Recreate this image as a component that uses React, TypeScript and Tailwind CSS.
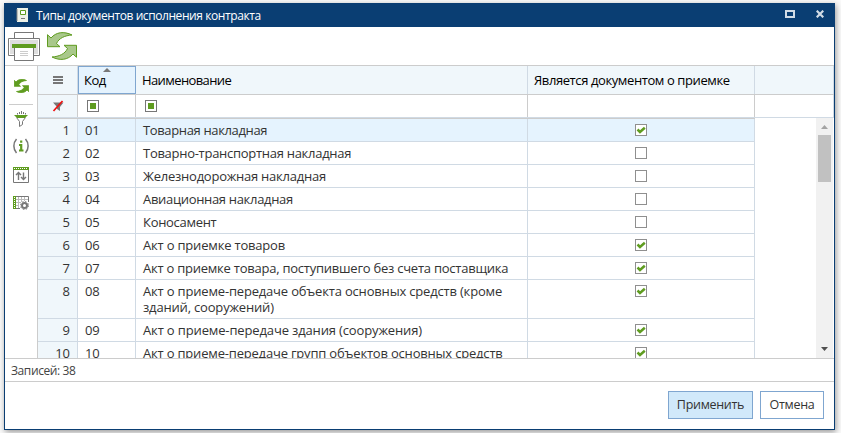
import React from "react";

const rows: [string, string, boolean, string][] = [
  ["01", "Товарная накладная", true, "tracking-[-0.36px]"],
  ["02", "Товарно-транспортная накладная", false, "tracking-[-0.28px]"],
  ["03", "Железнодорожная накладная", false, "tracking-[-0.24px]"],
  ["04", "Авиационная накладная", false, "tracking-[-0.32px]"],
  ["05", "Коносамент", false, "tracking-[-0.3px]"],
  ["06", "Акт о приемке товаров", true, "tracking-[-0.19px]"],
  ["07", "Акт о приемке товара, поступившего без счета поставщика", true, "tracking-[-0.24px]"],
  ["08", "Акт о приеме-передаче объекта основных средств (кроме зданий, сооружений)", true, "tracking-[-0.18px]"],
  ["09", "Акт о приеме-передаче здания (сооружения)", true, "tracking-[-0.14px]"],
  ["10", "Акт о приеме-передаче групп объектов основных средств", true, "tracking-[-0.19px]"],
];

function Swap({ className, soft }: { className: string; soft?: boolean }) {
  const arrow = "M.5 2.700L4 6C9 0 17-1 25 3C18 3.500 12 6 9.500 11.500L13 14.700H.5Z";
  return (
    <svg
      className={className}
      viewBox="0 0 30 28"
      fill={soft ? "#a9c88b" : "#5f9c20"}
      stroke="#5f9c20"
      strokeWidth={soft ? "1" : "1.6"}
    >
      <path d={arrow} />
      <path d={arrow} transform="rotate(180 15 14)" />
    </svg>
  );
}

function Check({ on }: { on: boolean }) {
  return (
    <span className="mt-[5px] block h-3 w-3 border border-[#8f8f8f] bg-white">
      {on && (
        <svg className="block h-[10px] w-[10px]" viewBox="0 0 10 10">
          <path d="M1.5 4.500L4 7L8.800 2.800" fill="none" stroke="#5f9c20" strokeWidth="2.500" />
        </svg>
      )}
    </span>
  );
}

function FilterBox() {
  return (
    <span className="block h-3 w-3 border border-[#777] bg-white p-[2px]">
      <span className="block h-[6px] w-[6px] bg-[#5f9c20]" />
    </span>
  );
}

function SideIcons() {
  return (
    <div className="flex w-8 shrink-0 flex-col items-center">
      <Swap className="mt-[13px] h-[14px] w-[15px]" />
      <div className="mt-[11px] h-px w-6 bg-[#ccc]" />
      <svg className="mt-[6px] h-4 w-4" viewBox="0 0 16 16" fill="none" stroke="#777">
        <path d="M8.500 0v3M6.500 1v2M10.500 1v2M4.500 2v1.500M12.500 2v1.500" />
        <path d="M1 4h14l-3 3H4z" fill="#5f9c20" stroke="none" />
        <path d="M3.500 6.500l3 4v5l3-2v-3l3-4" />
      </svg>
      <svg className="mt-[11px] h-4 w-4" viewBox="0 0 16 16" fill="none" stroke="#777" strokeWidth="1.5">
        <path d="M3.500 1C0 5 0 11 3.500 15M12.500 1C16 5 16 11 12.500 15" />
        <path d="M8.200 2.500v2.300M6 7h2.200v5M6 12.500h4.500" stroke="#5f9c20" strokeWidth="2.200" />
      </svg>
      <svg className="mt-[13px] h-4 w-4" viewBox="0 0 16 16" fill="none" stroke="#777">
        <path d="M.5 3v12.500h15V3" />
        <path d="M0 0h16v3H0z" fill="#5f9c20" stroke="none" />
        <path d="M1 1.500h14" stroke="#fff" strokeDasharray="1 1" />
        <path d="M5.500 13V6M3 8l2.500-2.500L8 8M10.500 5.500V12M8 10l2.500 2.500L13 10" strokeWidth="1.400" />
      </svg>
      <svg className="mt-[12px] h-4 w-4" viewBox="0 0 16 16" fill="none" stroke="#777">
        <path d="M3 1.500h12.500V7M3 13.500h4" />
        <path d="M3 4.500h12M3 7.500h5M3 10.500h3M5.500 2v11M8.500 2v5M11.500 2v4" stroke="#bbb" />
        <path d="M0 1h3v13H0z" fill="#5f9c20" stroke="none" />
        <path d="M1.500 2v11" stroke="#fff" strokeDasharray="1 1" />
        <circle cx="11.500" cy="10.500" r="2.500" fill="#fff" strokeWidth="2" />
        <circle cx="11.500" cy="10.500" r="4" strokeDasharray="1.600 1.540" />
      </svg>
    </div>
  );
}

export default function App() {
  return (
    <div className="h-[433px] w-[841px] overflow-hidden bg-[#fafafa] pt-[3px] pl-1 font-['Open_Sans',sans-serif] text-[13px] text-[#333]">
      <div className="flex h-[427px] w-[831px] flex-col border border-t-0 border-[#0a3e73] bg-white shadow-[1px_2px_6px_rgba(0,0,0,0.4)]">
        <div className="flex h-6 shrink-0 items-center bg-[#0a3e73] pl-[11px] text-white">
          <svg className="h-[14px] w-3" viewBox="0 0 12 14">
            <path d="M1 0h11v14H1z" fill="#eef2e8" />
            <path d="M0 2h2M0 4h2M0 6h2M0 8h2M0 10h2M0 12h2" stroke="#888" />
            <path d="M4.500 2.500h5v4h-5z" fill="#fff" stroke="#5f9c20" />
            <path d="M5 10.500h4" stroke="#777" />
          </svg>
          <span className="ml-2 grow pt-px text-[12px] leading-6 tracking-[-0.42px]">Типы документов исполнения контракта</span>
          <span className="mb-[2px] h-2 w-[10px] border-2 border-[#d2dce6]" />
          <svg className="mr-[10px] mb-[2px] ml-[21px] h-2 w-2" viewBox="0 0 8 8">
            <path d="M.7.7l6.600 6.600M7.300.7L.7 7.300" stroke="#d2dce6" strokeWidth="2.200" />
          </svg>
        </div>
        <div className="flex h-[38px] shrink-0 pt-[5px] pl-[3px]">
          <svg className="h-[29px] w-8" viewBox="0 0 32 29" stroke="#777" fill="#fff">
            <path d="M6.500.5h19v8h-19z" />
            <path d="M.5 6.500h31v17H.5z" />
            <path d="M2 8h28v14H2z" fill="#dedede" stroke="none" />
            <path d="M6.500 15.500h19v13h-19z" />
            <path d="M4 12h24v4H4z" fill="#5f9c20" stroke="none" />
            <path d="M12 19.500h8M12 21.500h8M12 23.500h8" stroke="#ccc" />
          </svg>
          <Swap soft className="ml-[7px] h-7 w-[30px]" />
        </div>
        <div className="flex h-[294px] shrink-0 border-y border-[#ccc]">
          <SideIcons />
          <div className="flex grow flex-col border-l border-[#ccc]">
            <div className="flex h-[29px] shrink-0 border-b border-[#ccc] bg-[#f0f7fb] text-black">
              <div className="flex w-[40px] items-center justify-center border-r border-[#d0dae4]">
                <svg className="h-2 w-[10px]" viewBox="0 0 10 8" fill="#777">
                  <path d="M0 0h10v2H0zM0 3h10v2H0zM0 6h10v2H0z" />
                </svg>
              </div>
              <div className="relative w-[58px] border border-[#7fa6d0] bg-[#e5f3fe] pl-[5px] leading-[27px] tracking-[-0.5px]">
                Код
                <svg className="absolute top-[1px] left-6 h-1 w-2" viewBox="0 0 8 4"><path d="M4 0L8 4H0z" fill="#777" /></svg>
              </div>
              <div className="w-[392px] border-r border-[#d0dae4] pl-[6px] leading-[29px] tracking-[-0.6px]">Наименование</div>
              <div className="w-[227px] border-r border-[#d0dae4] pl-[6px] leading-[29px] tracking-[-0.4px]">Является документом о приемке</div>
              <div className="w-[79px] border-r border-[#d0dae4]" />
            </div>
            <div className="flex h-[23px] shrink-0 border-b border-[#d0dae4]">
              <div className="flex w-[40px] items-center justify-center border-r border-[#ccc] bg-[#f0f7fb]">
                <svg className="h-3 w-3" viewBox="0 0 12 12">
                  <path d="M1 2.500h10.500L8 7v4L5 9V7z" fill="#777" />
                  <path d="M1.500 11L10.500 1" stroke="#f01010" strokeWidth="1.700" />
                </svg>
              </div>
              <div className="flex w-[58px] items-center border-r border-[#ccc] pl-[9px]"><FilterBox /></div>
              <div className="flex w-[392px] items-center border-r border-[#ccc] pl-[9px]"><FilterBox /></div>
              <div className="w-[227px] border-r border-[#ccc]" />
              <div className="w-[79px] border-r border-[#d0dae4]" />
            </div>
            <div className="flex h-[240px] overflow-hidden">
              <div className="w-[717px] shrink-0 border-t border-[#ccc]">
                {rows.map(([code, name, on, tracking], i) => (
                  <div key={code} className={`flex border-b border-[#d0dae4] leading-4 ${i === 0 ? "bg-[#e5f3fe]" : ""}`}>
                    <div className="w-[40px] border-r border-[#d0dae4] bg-[#f0f7fb] pt-[3px] pr-[7px] text-right">{i + 1}</div>
                    <div className="w-[58px] border-r border-[#d0dae4] pt-[3px] pl-[7px] tracking-[-0.2px]">{code}</div>
                    <div className={`w-[392px] border-r border-[#d0dae4] pt-[3px] pr-3 pb-[3px] pl-[7px] ${tracking}`}>{name}</div>
                    <div className="flex w-[227px] justify-center border-r border-[#d0dae4]"><Check on={on} /></div>
                  </div>
                ))}
              </div>
              <div className="ml-[61px] flex w-[17px] shrink-0 flex-col items-center bg-[#f1f1f1]">
                <svg className="mt-[7px] h-1 w-[7px] shrink-0" viewBox="0 0 7 4"><path d="M3.500 0L7 4H0z" fill="#a3a3a3" /></svg>
                <span className="mt-[6px] h-[47px] w-[13px] bg-[#c1c1c1]" />
                <svg className="mt-auto mb-[7px] h-1 w-[7px]" viewBox="0 0 7 4"><path d="M0 0h7L3.500 4z" fill="#505050" /></svg>
              </div>
            </div>
          </div>
        </div>
        <div className="h-[23px] shrink-0 border-b border-[#ccc] pl-[6px] text-[12px] leading-[23px] tracking-[-0.4px] text-[#444]">Записей: 38</div>
        <div className="flex gap-[7px] pt-[9px] pl-[663px]">
          <button className="h-7 w-[85px] border border-[#7fa6d0] bg-[#d1e9fa] text-[12.5px] tracking-[-0.3px]">Применить</button>
          <button className="h-7 w-16 border border-[#7fa6d0] bg-white text-[12.5px] tracking-[-0.3px]">Отмена</button>
        </div>
      </div>
    </div>
  );
}
